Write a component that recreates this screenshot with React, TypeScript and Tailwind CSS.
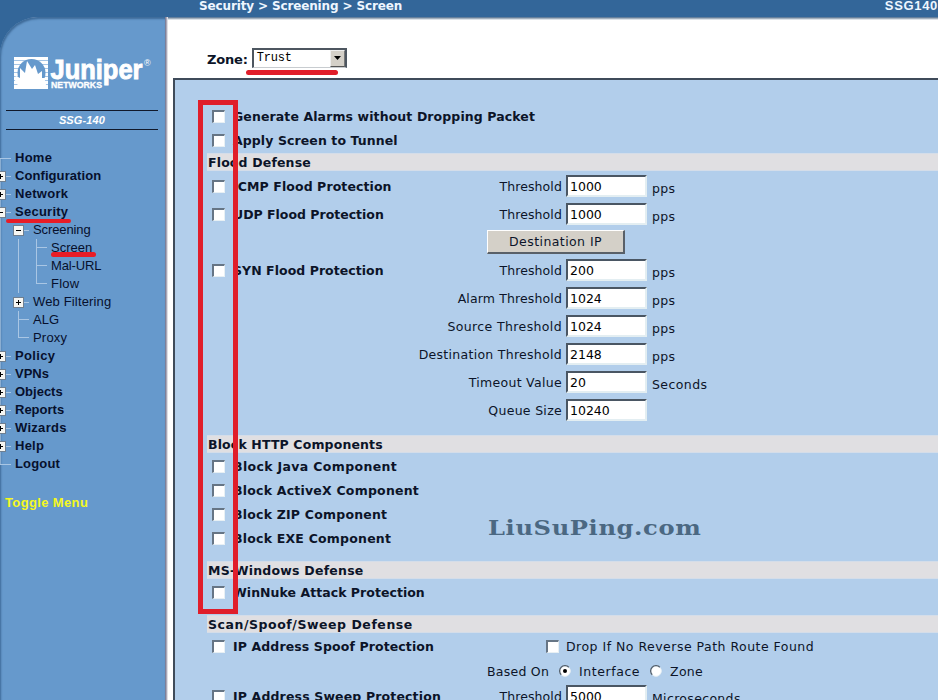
import { useLayoutEffect, useRef, type ReactNode } from "react";

/* Text tracked so that it fills exactly `w` pixels. */
function Fit({ w, children, className = "" }: { w: number; children: string; className?: string }) {
  const ref = useRef<HTMLSpanElement>(null);
  useLayoutEffect(() => {
    const el = ref.current;
    if (!el) return;
    el.style.letterSpacing = "0px";
    const natural = el.offsetWidth;
    el.style.letterSpacing = `${(w - natural) / children.length}px`;
  }, [w, children]);
  return (
    <span ref={ref} className={`inline-block shrink-0 whitespace-pre ${className}`}>
      {children}
    </span>
  );
}

function Logo() {
  return (
    <svg width="152" height="40" viewBox="0 0 152 40" className="block">
      <rect x="9" y="4" width="34" height="32" fill="#fff" />
      <path d="M9 7.500h34M9 11.500h34M9 15.500h34M9 19.500h34M9 23.500h34M9 27.500h34M9 31.500h34" stroke="#a5c5e6" strokeWidth="1" />
      <circle cx="26.500" cy="20" r="14" fill="#6699cc" />
      <path
        d="M9 35l4-3c-3-3-4-6-2-9l4 2 0-10 5 5 2-12 5 8 3-4 3 9 4-3 0 7 4 0-2 5 2 1c0 3-2 4-4 5l4 0V36H9z"
        fill="#fff"
      />
      <text x="45.500" y="26" textLength="92" lengthAdjust="spacingAndGlyphs" fill="#fff" stroke="#fff" strokeWidth="0.900" className="font-['Liberation_Sans',sans-serif] text-[27px] font-bold">
        Juniper
      </text>
      <text x="46" y="35" textLength="51" lengthAdjust="spacingAndGlyphs" fill="#fff" stroke="#fff" strokeWidth="0.300" className="font-['Liberation_Sans',sans-serif] text-[9px] font-bold">
        NETWORKS
      </text>
      <text x="139" y="13" fill="#fff" className="font-['Liberation_Sans',sans-serif] text-[9px]">
        ®
      </text>
    </svg>
  );
}

function Toggle({ open }: { open?: boolean }) {
  return (
    <svg width="11" height="11" viewBox="0 0 11 11" className="block shrink-0">
      <rect x="0.500" y="0.500" width="10" height="10" fill="#f6f6f2" stroke="#6f7f90" />
      <path d={open ? "M3 5.500h5" : "M3 5.500h5M5.500 3v5"} stroke="#000" />
    </svg>
  );
}

const topItems = (items: [string, number, string][]) =>
  items.map(([label, w, kind]) => (
    <li key={label} className="flex h-[18px] items-center">
      <span className="flex w-[15px] items-center">
        {kind === "leaf" ? (
          <span className="h-px w-[11px] bg-[#a9c6e4]" />
        ) : (
          <>
            <span className="-ml-[5px] shrink-0">
              <Toggle open={kind === "open"} />
            </span>
            <span className="h-px w-[5px] bg-[#a9c6e4]" />
          </>
        )}
      </span>
      <Fit w={w} className="text-[13px] font-bold">{label}</Fit>
    </li>
  ));

function SubItem({ label, w, toggle, open, last }: { label: string; w: number; toggle?: boolean; open?: boolean; last?: boolean }) {
  return (
    <li className="flex h-[18px] items-center">
      {toggle ? (
        <span className="flex w-[33px] shrink-0 items-center pl-[13px]">
          <Toggle open={open} />
          <span className="h-px w-[5px] bg-[#a9c6e4]" />
        </span>
      ) : (
        <span className="grid h-[18px] w-[33px] shrink-0 grid-cols-[19px_14px] grid-rows-[9px_9px]">
          <span className="border-r border-[#a9c6e4]" />
          <span className="h-px w-2.5 self-end bg-[#a9c6e4]" />
          <span className={last ? "" : "border-r border-[#a9c6e4]"} />
        </span>
      )}
      <Fit w={w} className="text-[13px]">{label}</Fit>
    </li>
  );
}

function LeafItem({ label, w, last }: { label: string; w: number; last?: boolean }) {
  return (
    <li className="flex h-[18px] items-center">
      <span className="h-[18px] w-[19px] shrink-0 border-r border-[#a9c6e4]" />
      <span className="grid h-[18px] w-[32px] shrink-0 grid-cols-[18px_14px] grid-rows-[9px_9px]">
        <span className="border-r border-[#a9c6e4]" />
        <span className="h-px w-2.5 self-end bg-[#a9c6e4]" />
        <span className={last ? "" : "border-r border-[#a9c6e4]"} />
      </span>
      <Fit w={w} className="text-[13px]">{label}</Fit>
    </li>
  );
}

function Sidebar() {
  return (
    <aside className="relative w-[165px] shrink-0 rounded-tl-[38px] bg-[#6699cc] font-['Liberation_Sans',Arial,sans-serif] text-[#06102c] shadow-[inset_1px_2px_2px_#3e6b99,1px_0_0_#7d8099,2px_0_0_#aaa8b8,3px_0_0_#dedee4]">
      <div className="pt-[36px] pl-[5px]">
        <Logo />
      </div>
      <div className="mt-[17px] ml-1.5 flex h-5 w-[152px] items-center justify-center border-y border-[#10182a]">
        <Fit w={46} className="text-[11px] font-bold text-white italic">SSG-140</Fit>
      </div>
      <div className="absolute top-[141px] left-0 h-[306px] w-px bg-[#a9c6e4]/70" />
      <ul className="relative mt-[19px]">
        {topItems([
          ["Home", 37, "leaf"],
          ["Configuration", 86, "closed"],
          ["Network", 53, "closed"],
          ["Security", 53, "open"],
        ])}
        <SubItem label="Screening" w={58} toggle open />
        <LeafItem label="Screen" w={41} />
        <LeafItem label="Mal-URL" w={50} />
        <LeafItem label="Flow" w={28} last />
        <SubItem label="Web Filtering" w={78} toggle />
        <SubItem label="ALG" w={26} />
        <SubItem label="Proxy" w={34} last />
        {topItems([
          ["Policy", 40, "closed"],
          ["VPNs", 34, "closed"],
          ["Objects", 48, "closed"],
          ["Reports", 49, "closed"],
          ["Wizards", 52, "closed"],
          ["Help", 29, "closed"],
          ["Logout", 45, "leaf"],
        ])}
      </ul>
      <div className="mt-[21px] flex h-[18px] items-center pl-[5px]">
        <Fit w={83} className="text-[13px] font-bold text-[#f5f820]">Toggle Menu</Fit>
      </div>
      <div className="absolute top-[202px] left-1.5 h-1 w-[65px] rounded-full bg-[#e81c26]" />
      <div className="absolute top-[235px] left-[51px] h-[5px] w-[45px] rounded-full bg-[#e81c26]" />
    </aside>
  );
}

function Check() {
  return (
    <span className="block size-[13px] shrink-0 border-t-2 border-r border-b border-l-2 border-t-[#667585] border-r-[#e8f0f4] border-b-[#e8f0f4] border-l-[#667585] bg-white" />
  );
}

function Radio({ on }: { on?: boolean }) {
  return (
    <svg width="12" height="12" viewBox="0 0 12 12" className="block shrink-0">
      <circle cx="6" cy="6" r="5.300" fill="#fff" stroke="#e8f0f4" />
      <path d="M2.200 9.800A5.300 5.300 0 0 1 9.800 2.200" fill="none" stroke="#556270" strokeWidth="1.300" />
      {on && <circle cx="6" cy="6" r="2" fill="#000" />}
    </svg>
  );
}

function Bar({ w, children }: { w: number; children: string }) {
  return (
    <h2 className="ml-8 flex h-[18px] shrink-0 items-center border-y border-[#d4dde9] bg-[#e0dfe2] pl-px text-[12.5px] font-bold">
      <Fit w={w} className="pt-0.5">{children}</Fit>
    </h2>
  );
}

function Option({ label, w }: { label: string; w: number }) {
  return (
    <div className="flex items-center gap-2">
      <Check />
      <Fit w={w} className="pt-0.5 text-[12.5px] font-bold">{label}</Fit>
    </div>
  );
}

function Field({ label, w, value, vw, unit, uw, children }: { label: string; w: number; value: string; vw: number; unit?: string; uw?: number; children?: ReactNode }) {
  return (
    <div className="flex h-7 shrink-0 items-center pl-[37px]">
      <div className="w-[200px] shrink-0">{children}</div>
      <div className="flex w-[150px] shrink-0 justify-end pt-0.5">
        <Fit w={w}>{label}</Fit>
      </div>
      <div className="ml-1 flex h-[22px] w-[81px] shrink-0 items-center border-2 border-t-[#4a5663] border-r-[#e3eef2] border-b-[#e3eef2] border-l-[#4a5663] bg-white pt-0.5 pl-[2px] text-black">
        <Fit w={vw}>{value}</Fit>
      </div>
      {unit && uw && (
        <div className="mt-1.5 ml-[5px]">
          <Fit w={uw}>{unit}</Fit>
        </div>
      )}
    </div>
  );
}

export default function App() {
  return (
    <div className="relative flex h-[700px] w-[938px] flex-col overflow-hidden bg-[#336699] font-['DejaVu_Sans',Verdana,sans-serif] text-[12.5px] leading-[14px] text-[#0c1428]">
      <header className="flex h-[17px] shrink-0 justify-between pl-[199px] font-bold text-[#eef6ff]">
        <Fit w={203} className="-mt-px text-[12px]">{"Security > Screening > Screen"}</Fit>
        <Fit w={53} className="-mt-px font-['Liberation_Sans',Arial,sans-serif] text-[13px]">SSG140</Fit>
      </header>
      <div className="flex min-h-0 flex-1">
        <Sidebar />
        <main className="ml-[3px] flex min-w-0 flex-1 flex-col bg-white shadow-[inset_0_1px_0_#65809d,inset_0_2px_0_#a2afbd,inset_0_3px_0_#dde2e8]">
          <div className="flex h-[61px] shrink-0 items-center pt-[20px] pl-[39px]">
            <Fit w={41} className="mt-[5px] text-[13px] font-bold">Zone:</Fit>
            <div className="ml-1 flex h-5 w-[95px] border-t-2 border-r-2 border-b border-l-2 border-[#4d5660] border-b-[#c8ccd0] bg-white">
              <span className="flex flex-1 items-center pl-[3px] font-['Liberation_Mono',monospace] text-[12px] text-black">
                <Fit w={35}>Trust</Fit>
              </span>
              <span className="flex w-[15px] items-center justify-center border border-t-[#eee] border-r-[#777] border-b-[#555] border-l-[#eee] bg-[#d4d0c8]">
                <svg width="7" height="4" viewBox="0 0 7 4">
                  <path d="M0 0h7L3.500 4z" fill="#000" />
                </svg>
              </span>
            </div>
          </div>
          <section className="ml-[5px] flex flex-1 flex-col border-t-2 border-l-2 border-[#3f4b5a] bg-[#b2ceeb] pt-6 whitespace-nowrap">
            <div className="flex h-6 shrink-0 items-center pl-[37px]"><Option label="Generate Alarms without Dropping Packet" w={302} /></div>
            <div className="mb-px flex h-6 shrink-0 items-center pl-[37px]"><Option label="Apply Screen to Tunnel" w={165} /></div>
            <Bar w={103}>Flood Defense</Bar>
            <div className="mt-px mb-[11px]">
              <Field label="Threshold" w={63} value="1000" vw={32} unit="pps" uw={23}><Option label="ICMP Flood Protection" w={159} /></Field>
              <Field label="Threshold" w={63} value="1000" vw={32} unit="pps" uw={23}><Option label="UDP Flood Protection" w={151} /></Field>
              <div className="flex h-7 items-center pl-[312px]">
                <button className="flex h-6 w-[138px] items-center justify-center border-t border-r-2 border-b-2 border-l border-t-white border-r-[#596068] border-b-[#596068] border-l-white bg-[#d4d0c8]">
                  <Fit w={93}>Destination IP</Fit>
                </button>
              </div>
              <Field label="Threshold" w={63} value="200" vw={24} unit="pps" uw={23}><Option label="SYN Flood Protection" w={151} /></Field>
              <Field label="Alarm Threshold" w={104} value="1024" vw={32} unit="pps" uw={23} />
              <Field label="Source Threshold" w={115} value="1024" vw={32} unit="pps" uw={23} />
              <Field label="Destination Threshold" w={143} value="2148" vw={32} unit="pps" uw={23} />
              <Field label="Timeout Value" w={93} value="20" vw={16} unit="Seconds" uw={56} />
              <Field label="Queue Size" w={74} value="10240" vw={40} />
            </div>
            <Bar w={175}>Block HTTP Components</Bar>
            <div className="mt-px mb-[11px] pl-[37px]">
              <div className="flex h-6 items-center"><Option label="Block Java Component" w={164} /></div>
              <div className="flex h-6 items-center"><Option label="Block ActiveX Component" w={186} /></div>
              <div className="flex h-6 items-center"><Option label="Block ZIP Component" w={154} /></div>
              <div className="flex h-6 items-center"><Option label="Block EXE Component" w={158} /></div>
            </div>
            <Bar w={156}>MS-Windows Defense</Bar>
            <div className="mt-px mb-[11px] flex h-6 shrink-0 items-center pl-[37px]"><Option label="WinNuke Attack Protection" w={192} /></div>
            <Bar w={205}>Scan/Spoof/Sweep Defense</Bar>
            <div className="mt-px flex h-6 shrink-0 items-center pl-[37px]">
              <div className="w-[334px]"><Option label="IP Address Spoof Protection" w={201} /></div>
              <Check />
              <Fit w={248} className="ml-[7px] pt-0.5">Drop If No Reverse Path Route Found</Fit>
            </div>
            <div className="-mb-px flex h-[25px] shrink-0 items-center pl-[312px]">
              <Fit w={62} className="pt-0.5">Based On</Fit>
              <span className="ml-[10px]"><Radio on /></span>
              <Fit w={61} className="ml-2 pt-0.5">Interface</Fit>
              <span className="ml-[10px]"><Radio /></span>
              <Fit w={33} className="ml-2 pt-0.5">Zone</Fit>
            </div>
            <Field label="Threshold" w={63} value="5000" vw={32} unit="Microseconds" uw={89}><Option label="IP Address Sweep Protection" w={208} /></Field>
          </section>
        </main>
      </div>
      <div className="absolute top-[515px] left-[488px] origin-left scale-x-[1.15] font-['DejaVu_Serif',serif] text-[21px] leading-[26px] font-bold text-[#4b6882]">
        <Fit w={186}>LiuSuPing.com</Fit>
      </div>
      <div className="absolute top-[100px] left-[198px] h-[514px] w-10 border-[5px] border-[#e01e2a]" />
      <div className="absolute top-[70px] left-[246px] h-[5px] w-[92px] rounded-full bg-[#e01e2a]" />
    </div>
  );
}
